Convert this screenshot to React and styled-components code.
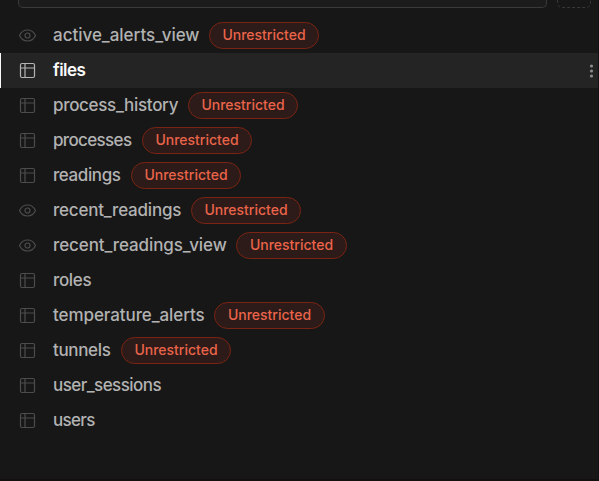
import React from "react";
import styled, { createGlobalStyle } from "styled-components";

const GlobalStyle = createGlobalStyle`
  * { box-sizing: border-box; }
  body {
    margin: 0;
    background: #171717;
    overflow: hidden;
    font-family: "Inter", "Liberation Sans", sans-serif;
  }
`;

const Panel = styled.main`
  display: flex;
  flex-direction: column;
  width: 599px;
  height: 481px;
  background: #171717;
  border-right: 1px solid #121212;
  border-bottom: 2px solid #141012;
  overflow: hidden;
`;

const Toolbar = styled.header`
  display: flex;
  flex: none;
  gap: 10px;
  height: 8px;
  margin-bottom: 10px;
  padding-left: 18px;
`;

const SearchBox = styled.div`
  width: 529px;
  height: 8px;
  background: #1c1c1c;
  border: 1px solid #3a3a3a;
  border-top: 0;
  border-radius: 0 0 5px 5px;
`;

const FilterButton = styled.svg`
  display: block;
  width: 34px;
  height: 8px;
  fill: none;
  stroke: #383838;
`;

const List = styled.ul`
  margin: 0;
  padding: 0;
  list-style: none;
`;

const Row = styled.li`
  display: flex;
  align-items: center;
  height: 35px;
  padding-left: 18px;
  padding-right: 3px;
  color: ${(p) => (p.$active ? "#fafafa" : "#b2b2b2")};
  background: ${(p) => (p.$active ? "#242424" : "transparent")};
  box-shadow: ${(p) => (p.$active ? "inset 1px 0 #fafafa" : "none")};
`;

const Icon = styled.svg`
  flex: none;
  width: 19px;
  height: 19px;
  margin-right: 16px;
  fill: none;
  stroke: ${(p) => (p.$active ? "#b4b4b4" : "#4c4c4c")};
  stroke-width: 1.2;
`;

const Label = styled.span`
  flex: none;
  width: ${(p) => p.$width}px;
  padding-bottom: 1px;
  font-size: 17px;
  line-height: 24px;
  font-weight: ${(p) => (p.$active ? 600 : 450)};
  letter-spacing: ${(p) => p.$tracking}px;
  white-space: nowrap;
`;

const Badge = styled.span`
  display: flex;
  flex: none;
  align-items: center;
  justify-content: center;
  width: ${(p) => (p.$wide ? 111 : 110)}px;
  height: 27px;
  margin-left: 10px;
  padding-bottom: 1px;
  border: 1px solid #7b2413;
  border-radius: 14px;
  background: #2c1b18;
  color: #e9644a;
  font-size: 14px;
  font-weight: 500;
  line-height: 18px;
`;

const MoreIcon = styled.svg`
  flex: none;
  width: 6px;
  height: 16px;
  margin-left: auto;
  fill: #8c8c8c;
`;

const items = [
  { name: "active_alerts_view", view: true, open: true, width: 146, tracking: -0.02 },
  { name: "files", active: true, width: 32, tracking: -0.55 },
  { name: "process_history", open: true, width: 125, tracking: -0.31 },
  { name: "processes", open: true, width: 79, tracking: -0.65 },
  { name: "readings", open: true, width: 68, tracking: -0.4 },
  { name: "recent_readings", view: true, open: true, width: 128, tracking: -0.2 },
  { name: "recent_readings_view", view: true, open: true, wide: true, width: 173, tracking: -0.1 },
  { name: "roles", width: 38, tracking: -0.35 },
  { name: "temperature_alerts", open: true, wide: true, width: 151, tracking: -0.08 },
  { name: "tunnels", open: true, width: 58, tracking: -0.35 },
  { name: "user_sessions", width: 108, tracking: -0.55 },
  { name: "users", width: 41, tracking: -0.7 },
];

function ItemIcon({ view, active }) {
  return (
    <Icon viewBox="0 0 19 19" $active={active}>
      {view ? (
        <>
          <path d="M1.5 9.5C3.1 6 5.9 4 9.5 4S15.9 6 17.5 9.5C15.9 13 13.1 15 9.5 15S3.1 13 1.5 9.5Z" />
          <circle cx="9.5" cy="9.5" r="2.5" />
        </>
      ) : (
        <>
          <rect x="2.5" y="2.5" width="14" height="14" rx="1.5" />
          <path d="M7 2.5V16.5M2.5 7H16.5" />
        </>
      )}
    </Icon>
  );
}

export default function App() {
  return (
    <>
      <GlobalStyle />
      <Panel>
        <Toolbar>
          <SearchBox />
          <FilterButton viewBox="0 0 34 8">
            <path d="M.5 0V2.5Q.5 7.5 5.5 7.5H28.5Q33.5 7.5 33.5 2.5V0" strokeDasharray="3 2" />
          </FilterButton>
        </Toolbar>
        <List>
          {items.map((item) => (
            <Row key={item.name} $active={item.active}>
              <ItemIcon view={item.view} active={item.active} />
              <Label $width={item.width} $tracking={item.tracking} $active={item.active}>
                {item.name}
              </Label>
              {item.open && <Badge $wide={item.wide}>Unrestricted</Badge>}
              {item.active && (
                <MoreIcon viewBox="0 0 6 16">
                  <circle cx="2.5" cy="3" r="1.6" />
                  <circle cx="2.5" cy="8" r="1.6" />
                  <circle cx="2.5" cy="13" r="1.6" />
                </MoreIcon>
              )}
            </Row>
          ))}
        </List>
      </Panel>
    </>
  );
}
